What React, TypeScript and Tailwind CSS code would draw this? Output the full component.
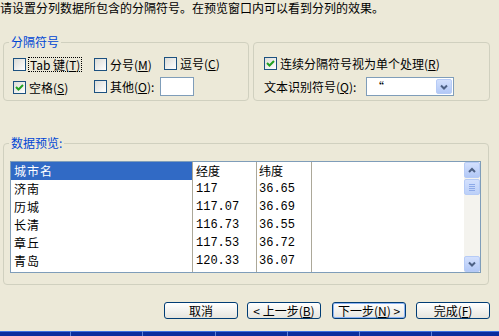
import React from 'react'

const FONT = { fontFamily: '"Noto Sans CJK SC", "Liberation Sans", sans-serif' }

function Check({ checked, focus, children }: { checked?: boolean; focus?: boolean; children: React.ReactNode }) {
  return (
    <span className="inline-flex items-center gap-[3px] leading-[13px] whitespace-nowrap">
      <span className="w-[13px] h-[13px] border border-[#1C5180] bg-linear-to-br from-[#DCDCD7] to-white flex items-center justify-center shrink-0">
        {checked && (
          <svg width="9" height="9" viewBox="0 0 9 9">
            <path d="M1 4 L3.5 6.5 L8 2" stroke="#21A121" strokeWidth="2" fill="none" />
          </svg>
        )}
      </span>
      <span className={focus ? 'outline-1 outline-dotted outline-black px-[1px]' : ''}>{children}</span>
    </span>
  )
}

function Group({ label, className, children }: { label: string; className: string; children: React.ReactNode }) {
  return (
    <div className={`relative border border-[#D0D0BF] rounded-[4px] ${className}`}>
      <span className="absolute left-[5px] top-[-8px] px-[2px] bg-[#ECE9D8] text-[#0046D5] leading-[14px]">{label}</span>
      {children}
    </div>
  )
}

function Btn({ children, def, className }: { children: React.ReactNode; def?: boolean; className: string }) {
  return (
    <div
      className={`w-[74px] h-[17px] border border-[#003C74] rounded-[3px] bg-linear-to-b from-white to-[#E6E5DE] flex items-center justify-center leading-[13px] ${
        def ? 'shadow-[inset_0_0_0_1px_#8EB3F2]' : ''
      } ${className}`}
    >
      {children}
    </div>
  )
}

function Chevron({ up }: { up?: boolean }) {
  return (
    <svg width="8" height="6" viewBox="0 0 8 6">
      <path d={up ? 'M1 5 L4 2 L7 5' : 'M1 1.5 L4 4.5 L7 1.5'} stroke="#4D6185" strokeWidth="2" fill="none" />
    </svg>
  )
}

const rows = [
  ['城市名', '经度', '纬度'],
  ['济南', '117', '36.65'],
  ['历城', '117.07', '36.69'],
  ['长清', '116.73', '36.55'],
  ['章丘', '117.53', '36.72'],
  ['青岛', '120.33', '36.07'],
]

export default function App() {
  return (
    <div className="relative w-[499px] h-[336px] bg-[#ECE9D8] text-black text-[12px] flex flex-col overflow-hidden" style={FONT}>
      <div className="h-[16px] leading-[16px] whitespace-nowrap">请设置分列数据所包含的分隔符号。在预览窗口内可以看到分列的效果。</div>

      <div className="flex mt-[26px]">
        <Group label="分隔符号" className="ml-[3px] w-[246px] h-[59px] pl-[9px] pt-[14px]">
          <div className="flex h-[13px]">
            <div className="w-[81px]">
              <Check focus>Tab 键(<u>T</u>)</Check>
            </div>
            <div className="w-[70px]">
              <Check>分号(<u>M</u>)</Check>
            </div>
            <Check>逗号(<u>C</u>)</Check>
          </div>
          <div className="flex items-center h-[19px] mt-[7px]">
            <div className="w-[81px]">
              <Check checked>空格(<u>S</u>)</Check>
            </div>
            <Check>其他(<u>O</u>):</Check>
            <div className="ml-[6px] w-[34px] h-[19px] border border-[#7F9DB9] bg-white" />
          </div>
        </Group>

        <Group label="" className="ml-[4px] w-[237px] h-[59px] pl-[10px] pt-[14px]">
          <div className="flex h-[13px]">
            <Check checked>连续分隔符号视为单个处理(<u>R</u>)</Check>
          </div>
          <div className="flex items-center h-[19px] mt-[7px]">
            <span className="w-[102px] leading-[13px] whitespace-nowrap">文本识别符号(<u>Q</u>):</span>
            <div className="w-[88px] h-[19px] border border-[#7F9DB9] bg-white flex items-center justify-between pl-[5px] pr-[1px]">
              <span className="leading-[13px]">“</span>
              <div className="w-[16px] h-[15px] rounded-[2px] border border-[#B6CBF6] bg-linear-to-b from-[#D3E0FD] to-[#B2C8F6] flex items-center justify-center">
                <Chevron />
              </div>
            </div>
          </div>
        </Group>
      </div>

      <Group label="数据预览:" className="ml-[3px] mt-[42px] w-[486px] h-[142px] pl-[6px] pt-[17px]">
        <div className="w-[471px] h-[112px] border border-[#7F9DB9] bg-white flex">
          <div className="w-[182px] border-r border-[#ACA899] flex flex-col">
            {rows.map((r, i) => (
              <div
                key={i}
                className={`h-[18px] leading-[18px] pl-[3px] tracking-[1px] ${i === 0 ? 'bg-[#316AC5] text-white' : ''}`}
              >
                {r[0]}
              </div>
            ))}
          </div>
          <div className="w-[64px] border-r border-[#ACA899] flex flex-col">
            {rows.map((r, i) => (
              <div key={i} className="h-[18px] leading-[18px] pl-[3px]" style={i ? { fontFamily: '"Liberation Mono", monospace' } : undefined}>
                {r[1]}
              </div>
            ))}
          </div>
          <div className="w-[55px] border-r border-[#ACA899] flex flex-col">
            {rows.map((r, i) => (
              <div key={i} className="h-[18px] leading-[18px] pl-[2px]" style={i ? { fontFamily: '"Liberation Mono", monospace' } : undefined}>
                {r[2]}
              </div>
            ))}
          </div>
          <div className="flex-1" />
          <div className="w-[16px] bg-[#F4F3EE] flex flex-col">
            <div className="h-[16px] rounded-[2px] border border-[#B6CBF6] bg-linear-to-b from-[#D3E0FD] to-[#B2C8F6] flex items-center justify-center">
              <Chevron up />
            </div>
            <div className="mt-[1px] h-[16px] rounded-[2px] border border-[#B6CBF6] bg-linear-to-b from-[#D3E0FD] to-[#BCD0F8] flex flex-col items-center justify-center gap-[1px]">
              <div className="w-[6px] h-[1px] bg-[#8DA9E8]" />
              <div className="w-[6px] h-[1px] bg-[#8DA9E8]" />
              <div className="w-[6px] h-[1px] bg-[#8DA9E8]" />
              <div className="w-[6px] h-[1px] bg-[#8DA9E8]" />
            </div>
            <div className="flex-1" />
            <div className="h-[16px] rounded-[2px] border border-[#B6CBF6] bg-linear-to-b from-[#D3E0FD] to-[#B2C8F6] flex items-center justify-center">
              <Chevron />
            </div>
          </div>
        </div>
      </Group>

      <div className="flex mt-[17px]">
        <Btn className="ml-[164px]">取消</Btn>
        <Btn className="ml-[9px]">&lt; 上一步(<u>B</u>)</Btn>
        <Btn className="ml-[11px]" def>
          下一步(<u>N</u>) &gt;
        </Btn>
        <Btn className="ml-[10px]">完成(<u>F</u>)</Btn>
      </div>

      <div className="mt-auto h-[5px] border-t border-[#3D6FE0] bg-[#0A2D9E] flex">
        {[70, 142, 215, 287, 359, 431].map((x, i) => (
          <div key={i} className="absolute bottom-0 w-[1px] h-[5px] bg-[#5A80D8]" style={{ left: x }} />
        ))}
      </div>
    </div>
  )
}
